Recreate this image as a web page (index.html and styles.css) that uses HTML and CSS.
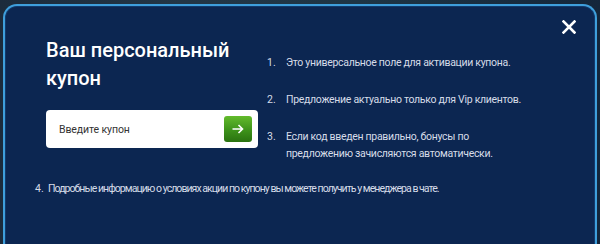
FILE: index.html
```html
<!DOCTYPE html>
<html lang="ru">
<head>
<meta charset="utf-8">
<link rel="stylesheet" href="styles.css">
</head>
<body>
<div class="modal">
  <button class="close" aria-label="Закрыть">
    <svg width="14" height="14" viewBox="0 0 14 14"><path d="M1.5 1.5 L12.5 12.5 M12.5 1.5 L1.5 12.5" stroke="#fff" stroke-width="2.6" stroke-linecap="square"/></svg>
  </button>
  <div class="top">
    <div class="left">
      <h1 class="title">Ваш персональный купон</h1>
      <div class="coupon">
        <span class="placeholder">Введите купон</span>
        <span class="go">
          <svg width="12" height="10" viewBox="0 0 12 10"><path d="M0.5 5 H10.5 M6.5 1 L10.5 5 L6.5 9" stroke="#fff" stroke-width="1.6" fill="none"/></svg>
        </span>
      </div>
    </div>
    <ol class="rules">
      <li><span class="n">1.</span><span>Это универсальное поле для активации купона.</span></li>
      <li><span class="n">2.</span><span>Предложение актуально только для Vip клиентов.</span></li>
      <li><span class="n">3.</span><span>Если код введен правильно, бонусы по<br>предложению зачисляются автоматически.</span></li>
    </ol>
  </div>
  <ol class="rules wide">
    <li><span class="n">4.</span><span>Подробные информацию о условиях акции по купону вы можете получить у менеджера в чате.</span></li>
  </ol>
</div>
</body>
</html>
```

FILE: styles.css
```css
html, body {
  margin: 0;
  padding: 0;
  height: 244px;
  overflow: hidden;
}
body {
  background: linear-gradient(90deg, #1c2b3c 0%, #233646 30%, #1e3545 60%, #14263b 100%);
  font-family: Roboto, "Noto Sans", sans-serif;
  padding-top: 4px;
  box-sizing: border-box;
}
.modal {
  position: relative;
  margin: 0 3px;
  height: 260px;
  box-sizing: border-box;
  background: #0c2651;
  border: 2px solid #3f9fdc;
  border-bottom: none;
  border-radius: 14px 14px 0 0;
  box-shadow: inset 0 0 0 1px #123a6c;
  padding: 30px 0 0 41px;
}
.close {
  position: absolute;
  top: 14px;
  right: 19px;
  width: 14px;
  height: 14px;
  padding: 0;
  border: 0;
  background: none;
  margin: 0;
  display: block;
}
.close svg { display: block; }
.top {
  display: flex;
  align-items: flex-start;
}
.left {
  width: 212px;
  flex: none;
}
.title {
  margin: 0;
  color: #fff;
  font-size: 20px;
  font-weight: 500;
  line-height: 28px;
  width: 200px;
}
.coupon {
  margin-top: 18px;
  height: 38px;
  background: #fff;
  border-radius: 4px;
  display: flex;
  align-items: center;
  justify-content: space-between;
  padding: 0 6px 0 13px;
  box-sizing: border-box;
}
.placeholder {
  font-size: 10.5px;
  letter-spacing: -0.1px;
  color: #333;
}
.go {
  width: 28px;
  height: 26px;
  border-radius: 3px;
  background: linear-gradient(180deg, #63bb2c 0%, #3d921a 55%, #2a7210 100%);
  display: flex;
  align-items: center;
  justify-content: center;
}
.go svg { display: block; }
.rules {
  list-style: none;
  margin: 18px 0 0 9px;
  padding: 0;
  color: #d6dce8;
  font-size: 10.5px;
  letter-spacing: -0.3px;
  line-height: 17px;
  white-space: nowrap;
}
.rules li {
  display: flex;
  margin-bottom: 20px;
}
.rules li:last-child { margin-bottom: 0; }
.rules .n {
  width: 19px;
  flex: none;
  letter-spacing: 0;
}
.rules.wide {
  margin: 18px 0 0 -11px;
  letter-spacing: -0.95px;
}
.rules.wide .n { width: 13px; }
```
